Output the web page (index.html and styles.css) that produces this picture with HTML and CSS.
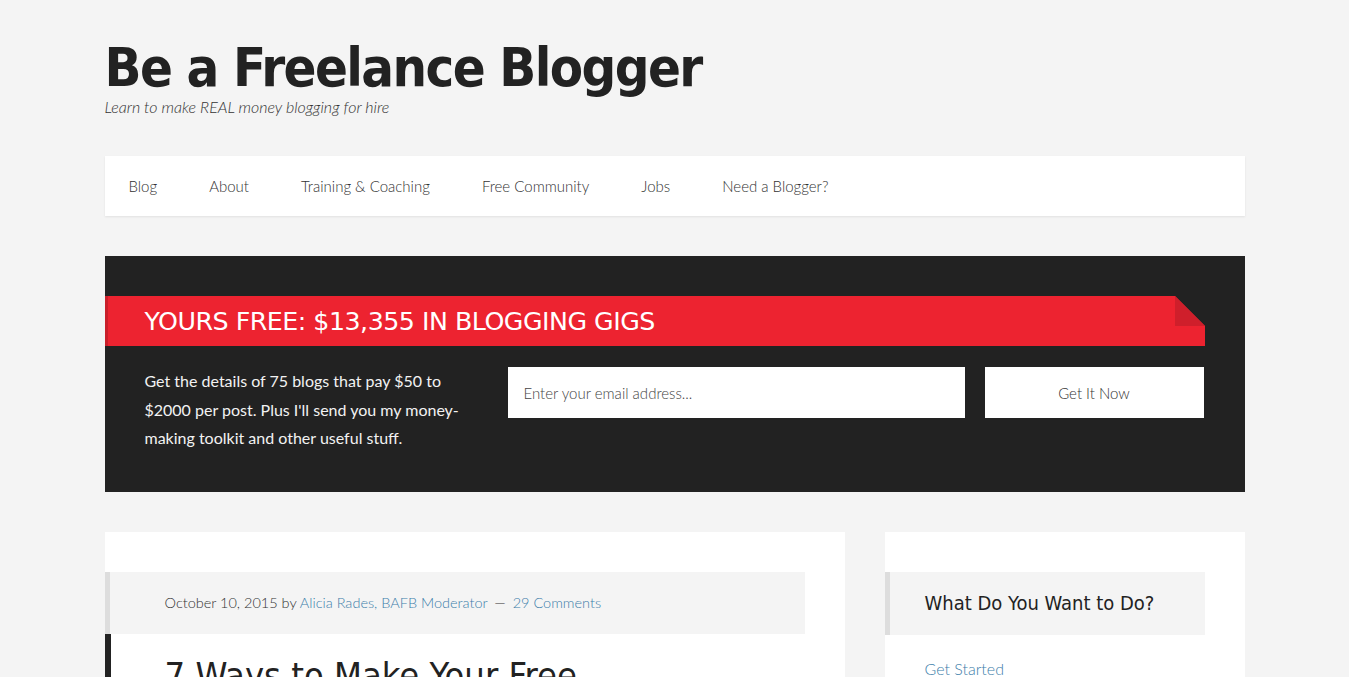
FILE: index.html
```html
<!DOCTYPE html>
<html lang="en">
<head>
  <meta charset="UTF-8" />
  <meta name="viewport" content="width=device-width, initial-scale=1.0"/>
  <title>Be a Freelance Blogger</title>
  <link rel="stylesheet" href="styles.css">
</head>
<body>

  <div class="site">
    <header class="site-header">
      <h1 class="site-title">Be a Freelance Blogger</h1>
      <p class="site-description">Learn to make REAL money blogging for hire</p>
    </header>

    <nav class="nav">
      <a href="#">Blog</a>
      <a href="#">About</a>
      <a href="#">Training &amp; Coaching</a>
      <a href="#">Free Community</a>
      <a href="#">Jobs</a>
      <a href="#">Need a Blogger?</a>
    </nav>

    <section class="optin">
      <h2 class="optin-title">YOURS FREE: $13,355 IN BLOGGING GIGS</h2>
      <div class="optin-body">
        <p class="optin-text">Get the details of 75 blogs that pay $50 to $2000 per post. Plus I'll send you my money-making toolkit and other useful stuff.</p>
        <input type="text" class="optin-email" placeholder="Enter your email address..." />
        <button class="optin-button">Get It Now</button>
      </div>
    </section>

    <div class="content-wrap">
      <main class="content">
        <div class="entry-meta">
          October 10, 2015 by <a href="#">Alicia Rades, BAFB Moderator</a> <span class="sep">&mdash;</span> <a href="#">29 Comments</a>
        </div>
        <div class="entry-head">
          <h2 class="entry-title">7 Ways to Make Your Free</h2>
        </div>
      </main>

      <aside class="sidebar">
        <h3 class="widget-title">What Do You Want to Do?</h3>
        <ul class="widget-list">
          <li><a href="#">Get Started</a></li>
        </ul>
      </aside>
    </div>
  </div>

</body>
</html>
```

FILE: styles.css
```css
body {
  margin: 0;
  background-color: #f4f4f4;
  color: #222;
  font-family: Lato, "Open Sans", sans-serif;
  font-weight: 300;
}
a {
  color: #3d7eaa;
  text-decoration: none;
}
.site {
  width: 1140px;
  margin: 0 auto;
}

/* header */
.site-header {
  padding-top: 43px;
  height: 156px;
  box-sizing: border-box;
}
.site-title {
  margin: 0;
  font-family: "DejaVu Sans Condensed", "DejaVu Sans", sans-serif;
  font-size: 54px;
  font-weight: bold;
  line-height: 50px;
  letter-spacing: -1.6px;
  color: #222;
}
.site-description {
  margin: 6px 0 0;
  font-size: 16px;
  font-style: italic;
  line-height: 16px;
  color: #333;
}

/* nav */
.nav {
  display: flex;
  height: 60px;
  align-items: center;
  background: #fff;
  box-shadow: 0 1px 2px rgba(0,0,0,0.08);
  margin-bottom: 40px;
}
.nav a {
  color: #333;
  font-size: 15px;
  padding: 0 28px 0 24px;
}

/* opt-in box */
.optin {
  background: #222;
  padding: 40px 40px 40px 0;
  height: 236px;
  box-sizing: border-box;
}
.optin-title {
  position: relative;
  margin: 0;
  height: 50px;
  line-height: 52px;
  padding-left: 37px;
  background: #ed2330;
  border-left: 3px solid #c91f2a;
  color: #fff;
  font-family: "DejaVu Sans", sans-serif;
  font-weight: normal;
  font-size: 25.3px;
  letter-spacing: -0.5px;
  box-sizing: border-box;
}
/* folded corner */
.optin-title::before,
.optin-title::after {
  content: "";
  position: absolute;
  top: 0;
  right: 0;
  border-style: solid;
}
.optin-title::before {
  border-width: 30px 0 0 30px;
  border-color: #222 transparent transparent transparent;
}
.optin-title::after {
  border-width: 0 30px 30px 0;
  border-color: transparent transparent #cf1f2b transparent;
}
.optin-body {
  display: flex;
  align-items: flex-start;
  padding: 21px 0 0 40px;
}
.optin-text {
  width: 340px;
  margin: 0 23px 0 0;
  color: #f2f2f2;
  font-weight: 400;
  font-size: 16px;
  line-height: 28.5px;
}
.optin-email {
  width: 457px;
  height: 51px;
  box-sizing: border-box;
  border: 0;
  padding: 0 16px;
  font-family: Lato, sans-serif;
  font-weight: 300;
  font-size: 15px;
  color: #333;
  outline: none;
}
.optin-email::placeholder {
  color: #444;
}
.optin-button {
  margin-left: 20px;
  width: 219px;
  height: 51px;
  border: 0;
  background: #fff;
  font-family: Lato, sans-serif;
  font-weight: 300;
  font-size: 15px;
  color: #333;
}

/* content */
.content-wrap {
  display: flex;
  gap: 40px;
  margin-top: 40px;
}
.content {
  width: 740px;
  background: #fff;
  padding: 40px 40px 0 0;
  box-sizing: border-box;
}
.entry-meta {
  background: #f4f4f4;
  border-left: 5px solid #ddd;
  height: 62px;
  box-sizing: border-box;
  padding: 22px 0 0 55px;
  font-size: 14.5px;
  color: #333;
}
.entry-meta .sep {
  margin: 0 3px;
}
.entry-head {
  border-left: 6px solid #222;
  padding: 20px 0 0 54px;
}
.entry-title {
  margin: 0;
  font-family: "DejaVu Sans Condensed", "DejaVu Sans", sans-serif;
  font-weight: normal;
  font-size: 36px;
  line-height: 44px;
  color: #222;
}

/* sidebar */
.sidebar {
  width: 360px;
  background: #fff;
  padding: 40px 40px 0 0;
  box-sizing: border-box;
}
.widget-title {
  margin: 0;
  background: #f4f4f4;
  border-left: 5px solid #ddd;
  height: 63px;
  box-sizing: border-box;
  padding: 0 0 0 35px;
  line-height: 63px;
  font-family: "DejaVu Sans Condensed", "DejaVu Sans", sans-serif;
  font-weight: normal;
  font-size: 20px;
  color: #222;
}
.widget-list {
  list-style: none;
  margin: 0;
  padding: 24px 0 0 40px;
  font-size: 16px;
}
```
